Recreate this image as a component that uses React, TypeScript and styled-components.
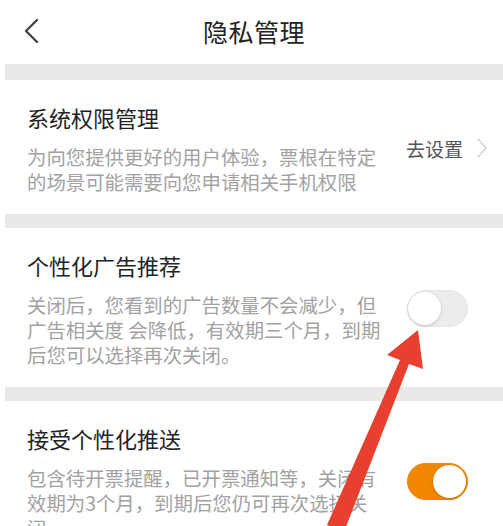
import styled, { createGlobalStyle } from "styled-components";

const GlobalStyle = createGlobalStyle`
    html, body {
        margin: 0;
        padding: 0;
        background: #fff;
    }
    body {
        font-family: "Noto Sans CJK SC", "Noto Sans", sans-serif;
        -webkit-font-smoothing: antialiased;
    }
`;

const Screen = styled.div`
    position: relative;
    width: 503px;
    height: 526px;
    overflow: hidden;
    background: #fff;
    padding-left: 5px;
    box-sizing: border-box;
`;

const TopBar = styled.header`
    height: 64px;
    display: grid;
    grid-template-columns: 60px 1fr 60px;
    align-items: center;
`;

const BackButton = styled.button`
    border: 0;
    background: none;
    padding: 0 0 2px 18px;
    display: flex;
    align-items: center;
    cursor: pointer;
`;

const PageTitle = styled.h1`
    margin: 0 0 2px;
    text-align: center;
    font-size: 25px;
    font-weight: 400;
    color: #222;
    letter-spacing: 0.5px;
`;

const Divider = styled.div<{ $h: number }>`
    height: ${(p) => p.$h}px;
    background: #e9e9e9;
`;

const Row = styled.section`
    display: flex;
    align-items: center;
    justify-content: space-between;
    padding: 22px 0 20px 22px;
`;

const TextBlock = styled.div`
    display: flex;
    flex-direction: column;
    gap: 12px;
`;

const RowTitle = styled.div`
    font-size: 22px;
    line-height: 30px;
    color: #232323;
`;

const Desc = styled.div`
    font-size: 19.4px;
    line-height: 25px;
    color: #a2a2a2;
    white-space: nowrap;
`;

const Trailing = styled.div<{ $inset: number }>`
    display: flex;
    align-items: center;
    gap: 14px;
    margin-right: ${(p) => p.$inset}px;
`;

const LinkText = styled.span`
    font-size: 19px;
    color: #555;
`;

const Track = styled.div<{ $on: boolean }>`
    position: relative;
    width: 61px;
    height: 37px;
    border-radius: 19px;
    box-sizing: border-box;
    background: ${(p) => (p.$on ? "#f18600" : "#ececec")};
    border: 1px solid ${(p) => (p.$on ? "#f18600" : "#e6e6e6")};
`;

const Knob = styled.div<{ $on: boolean }>`
    position: absolute;
    top: 1px;
    left: ${(p) => (p.$on ? "25px" : "0")};
    width: 33px;
    height: 33px;
    border-radius: 50%;
    background: #fff;
    box-shadow: 0 1px 3px rgba(0, 0, 0, 0.18);
`;

const Overlay = styled.svg`
    position: absolute;
    inset: 0;
    pointer-events: none;
`;

type Item = {
    title: string;
    lines: string[];
    kind: "link" | "off" | "on";
};

const items: Item[] = [
    {
        title: "系统权限管理",
        lines: ["为向您提供更好的用户体验，票根在特定", "的场景可能需要向您申请相关手机权限"],
        kind: "link",
    },
    {
        title: "个性化广告推荐",
        lines: [
            "关闭后，您看到的广告数量不会减少，但",
            "广告相关度 会降低，有效期三个月，到期",
            "后您可以选择再次关闭。",
        ],
        kind: "off",
    },
    {
        title: "接受个性化推送",
        lines: [
            "包含待开票提醒，已开票通知等，关闭有",
            "效期为3个月，到期后您仍可再次选择关",
            "闭。",
        ],
        kind: "on",
    },
];

function Switch({ on }: { on: boolean }) {
    return (
        <Track $on={on}>
            <Knob $on={on} />
        </Track>
    );
}

export default function App() {
    return (
        <>
            <GlobalStyle />
            <Screen>
                <TopBar>
                    <BackButton>
                        <svg width="16" height="26" viewBox="0 0 16 26">
                            <polyline
                                points="14,2 3,13 14,24"
                                fill="none"
                                stroke="#444"
                                strokeWidth="2.4"
                                strokeLinecap="round"
                                strokeLinejoin="round"
                            />
                        </svg>
                    </BackButton>
                    <PageTitle>隐私管理</PageTitle>
                    <span />
                </TopBar>

                {items.map((item, i) => (
                    <div key={item.title}>
                        <Divider $h={i === 0 ? 16 : 14} />
                        <Row>
                            <TextBlock>
                                <RowTitle>{item.title}</RowTitle>
                                <div>
                                    {item.lines.map((l) => (
                                        <Desc key={l}>{l}</Desc>
                                    ))}
                                </div>
                            </TextBlock>
                            {item.kind === "link" ? (
                                <Trailing $inset={16}>
                                    <LinkText>去设置</LinkText>
                                    <svg width="10" height="20" viewBox="0 0 10 20">
                                        <polyline
                                            points="1,1 9,10 1,19"
                                            fill="none"
                                            stroke="#d0d0d0"
                                            strokeWidth="1.5"
                                        />
                                    </svg>
                                </Trailing>
                            ) : (
                                <Trailing $inset={35}>
                                    <Switch on={item.kind === "on"} />
                                </Trailing>
                            )}
                        </Row>
                    </div>
                ))}

                <Overlay width="503" height="526" viewBox="0 0 503 526">
                    <polygon
                        points="418,330 423,369 409,364 344,532 327,525 400,360 387,355"
                        fill="#e8402f"
                    />
                </Overlay>
            </Screen>
        </>
    );
}
